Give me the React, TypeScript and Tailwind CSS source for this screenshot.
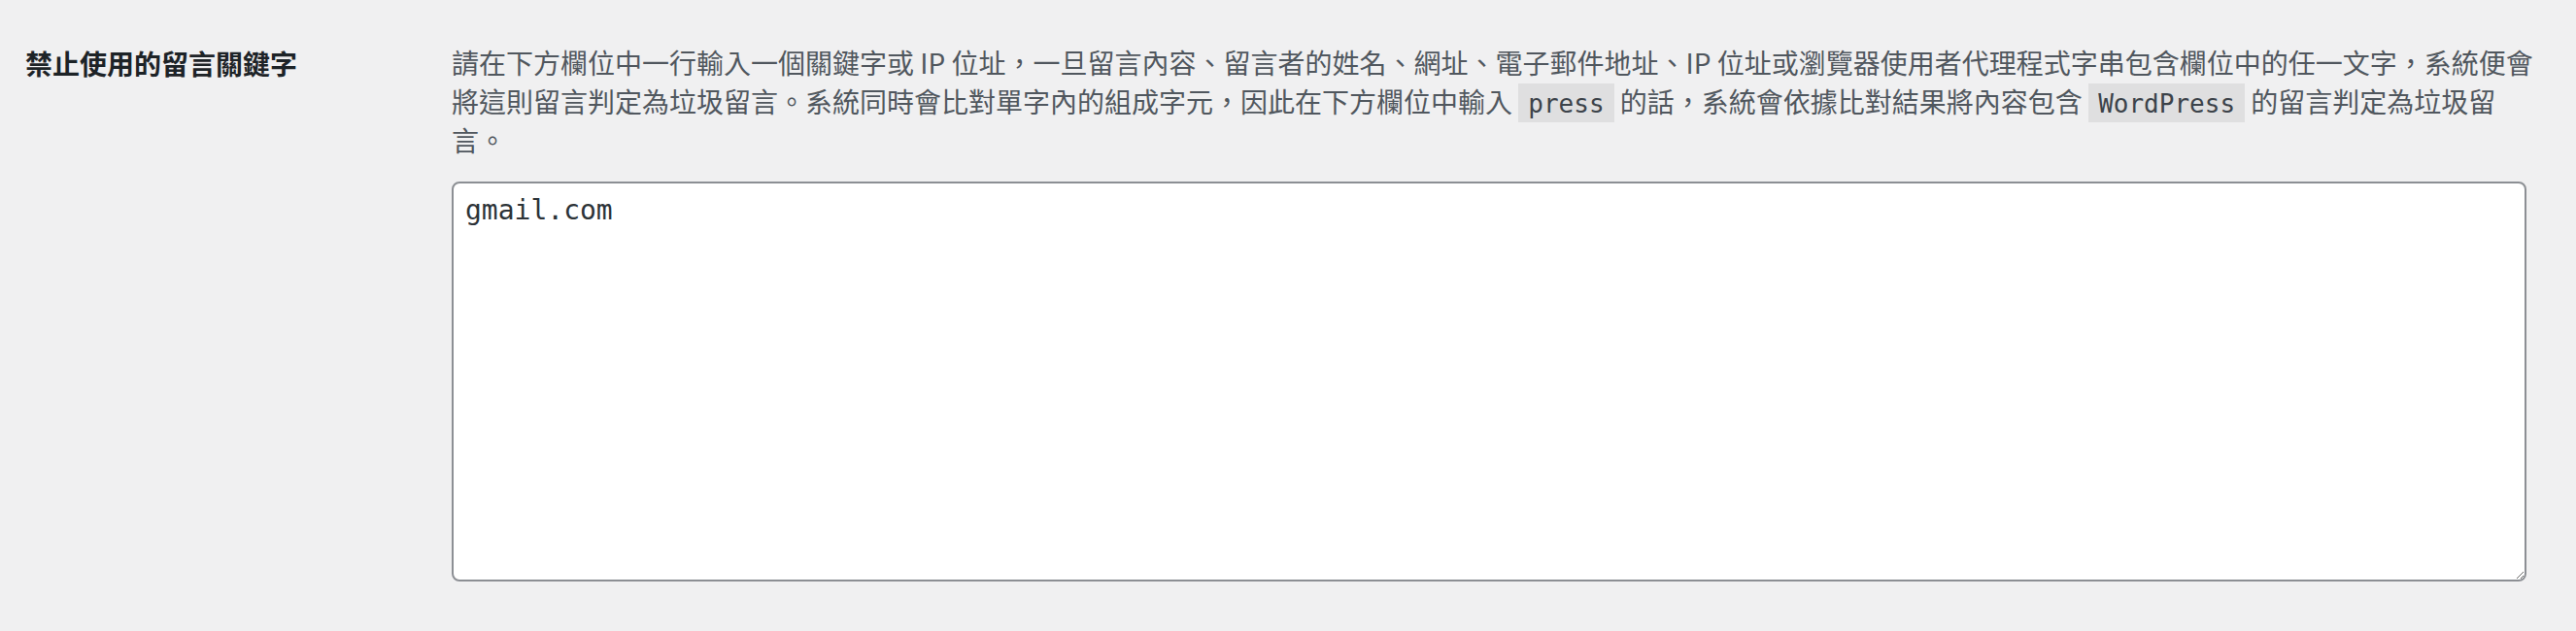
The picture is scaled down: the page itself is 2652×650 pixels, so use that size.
export default function App() {
  return (
    <div className="min-h-[650px] w-full bg-[#f0f0f1] font-['Noto_Sans_CJK_TC','Noto_Sans',sans-serif]">
      {/* settings row */}
      <div className="flex pl-[26px] pr-[29px] pt-[44px]">
        <div className="w-[439px] shrink-0 pt-[3px] text-[28px] font-semibold leading-[36px] text-[#1d2327]">
          禁止使用的留言關鍵字
        </div>
        <div className="flex-1">
          <p className="text-[28px] leading-[40px] text-[#50575e]">
            請在下方欄位中一行輸入一個關鍵字或 IP 位址，一旦留言內容、留言者的姓名、網址、電子郵件地址、IP
            位址或瀏覽器使用者代理程式字串包含欄位中的任一文字，系統便會將這則留言判定為垃圾留言。系統同時會比對單字內的組成字元，因此在下方欄位中輸入{" "}
            <code className="bg-[#dfdfe0] px-[10px] pt-[6px] pb-[4px] font-['DejaVu_Sans_Mono',monospace] text-[26px] leading-none text-[#3c434a]">
              press
            </code>{" "}
            的話，系統會依據比對結果將內容包含{" "}
            <code className="bg-[#dfdfe0] px-[10px] pt-[6px] pb-[4px] font-['DejaVu_Sans_Mono',monospace] text-[26px] leading-none text-[#3c434a]">
              WordPress
            </code>{" "}
            的留言判定為垃圾留言。
          </p>
          <textarea
            defaultValue="gmail.com"
            className="mt-[23px] block h-[412px] w-[2136px] rounded-[8px] border-2 border-[#8c8f94] bg-white px-[12px] pt-[8px] font-['DejaVu_Sans_Mono',monospace] text-[28px] leading-[40px] text-[#2c3338] outline-none"
          />
        </div>
      </div>
    </div>
  );
}
